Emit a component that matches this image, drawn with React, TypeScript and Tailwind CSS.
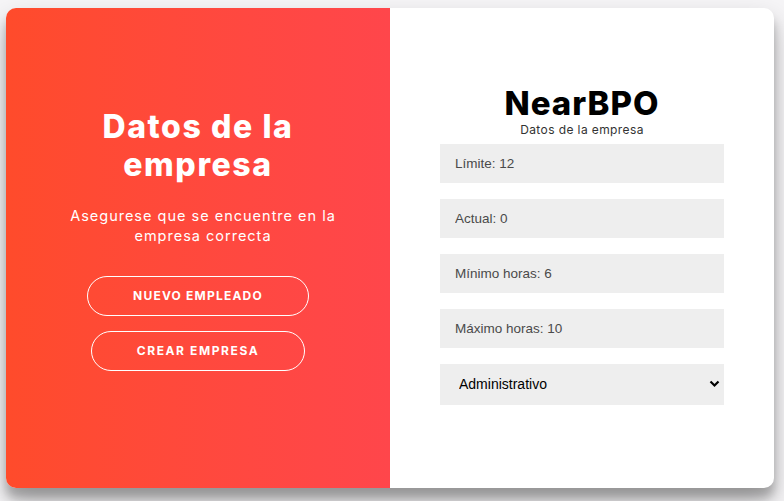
import React from 'react';

const fields = ['Límite: 12', 'Actual: 0', 'Mínimo horas: 6', 'Máximo horas: 10'];

const App = () => {
  return (
    <div className="min-h-screen bg-[#f6f5f7] pt-[8px] pl-[6px]" style={{ fontFamily: 'Inter, "Open Sans", sans-serif' }}>
      <div className="w-[768px] h-[480px] flex rounded-[10px] overflow-hidden bg-white shadow-[0_14px_28px_rgba(0,0,0,0.25),0_10px_10px_rgba(0,0,0,0.22)]">
        {/* Left panel - gradient */}
        <div className="w-[384px] flex flex-col items-center pt-[100px] px-10 text-white text-center bg-gradient-to-r from-[#ff4b2b] to-[#ff464b]">
          <h1 className="text-[32px] leading-[38px] font-extrabold tracking-[1.6px] px-4">Datos de la empresa</h1>
          <p className="mt-[22px] ml-[10px] w-[290px] text-[14.5px] leading-[20px] tracking-[1px]">
            Asegurese que se encuentre en la empresa correcta
          </p>
          <button className="mt-[30px] h-[40px] px-[45px] rounded-full border border-white text-[12px] font-bold tracking-[1.2px] uppercase">
            Nuevo empleado
          </button>
          <button className="mt-[15px] h-[40px] px-[45px] rounded-full border border-white text-[12px] font-bold tracking-[1.6px] uppercase">
            Crear empresa
          </button>
        </div>

        {/* Right panel - form */}
        <div className="flex-1 flex flex-col px-[50px] pt-[75px]">
          <h1 className="text-center text-[33px] leading-[40px] font-extrabold tracking-[1px] text-black">NearBPO</h1>
          <p className="text-center text-[12px] leading-[14px] tracking-[0.4px] text-[#333]">Datos de la empresa</p>
          <div className="flex flex-col gap-4 mt-[7px]" style={{ fontFamily: '"Liberation Sans", Arial, sans-serif' }}>
            {fields.map((f) => (
              <input
                key={f}
                readOnly
                placeholder={f}
                className="h-[39px] w-full bg-[#eee] px-[15px] text-[13.5px] outline-none placeholder:text-[#4a4a4a]"
              />
            ))}
            <div className="relative h-[41px] bg-[#eee]">
              <select className="appearance-none w-full h-full bg-transparent pl-[19px] text-[14px] text-black outline-none">
                <option>Administrativo</option>
              </select>
              <svg className="absolute right-[4px] top-[16px] pointer-events-none" width="11" height="8" viewBox="0 0 11 8">
                <path d="M1.5 1.5 L5.5 5.5 L9.5 1.5" fill="none" stroke="#000" strokeWidth="2.2" />
              </svg>
            </div>
          </div>
        </div>
      </div>
    </div>
  );
};

export default App;
